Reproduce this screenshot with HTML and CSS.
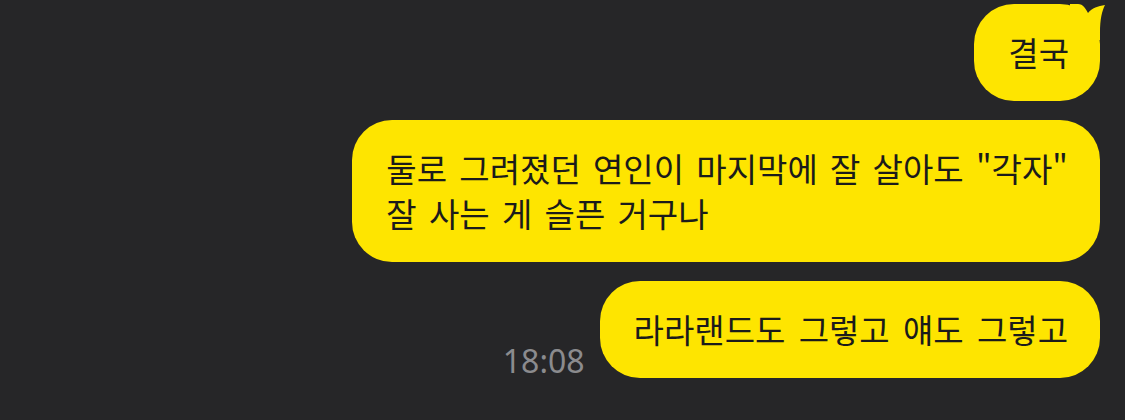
FILE: index.html
```html
<!DOCTYPE html>
<html lang="ko">
<head>
    <meta charset="UTF-8">
    <meta name="viewport" content="width=device-width, initial-scale=1.0">
    <title>채팅</title>
    <link rel="stylesheet" href="styles.css">
</head>
<body>
    <div class="chat">
        <div class="msg-row">
            <div class="bubble bubble-first">
                결국
                <svg class="tail" viewBox="0 0 42 42" width="42" height="42" aria-hidden="true">
                    <path d="M0 1 L8 1 C13 1 16 6 18 10 C22 5 28 3 35 2 C32 8 30 16 30 30 L30 37 L0 37 Z" fill="#fee500"/>
                </svg>
            </div>
        </div>

        <div class="msg-row">
            <div class="bubble bubble-long">둘로 그려졌던 연인이 마지막에 잘 살아도 "각자"<br>잘 사는 게 슬픈 거구나</div>
        </div>

        <div class="msg-row">
            <span class="time">18:08</span>
            <div class="bubble">라라랜드도 그렇고 얘도 그렇고</div>
        </div>
    </div>
</body>
</html>
```

FILE: styles.css
```css
* {
    margin: 0;
    padding: 0;
    box-sizing: border-box;
}

body {
    background: #262628;
    font-family: "Noto Sans CJK KR", "Noto Sans", sans-serif;
    overflow: hidden;
}

.chat {
    display: flex;
    flex-direction: column;
    align-items: flex-end;
    gap: 19px;
    padding: 4px 25px 0 0;
}

.msg-row {
    display: flex;
    align-items: flex-end;
    gap: 15px;
}

.bubble {
    position: relative;
    background: #fee500;
    color: #1b1b1b;
    font-size: 33px;
    line-height: 45px;
    padding: 26px 32px 26px 34px;
    border-radius: 40px;
    word-spacing: 4px;
    word-break: keep-all;
    white-space: nowrap;
}

.bubble-long {
    word-spacing: 3px;
}

.bubble-first {
    padding: 26px 31px 26px 34px;
}

.tail {
    position: absolute;
    top: -1px;
    right: -12px;
}

.time {
    color: #8b8b8e;
    font-family: "Noto Sans", sans-serif;
    font-size: 32px;
    line-height: 1;
    margin-bottom: 1px;
}
```
